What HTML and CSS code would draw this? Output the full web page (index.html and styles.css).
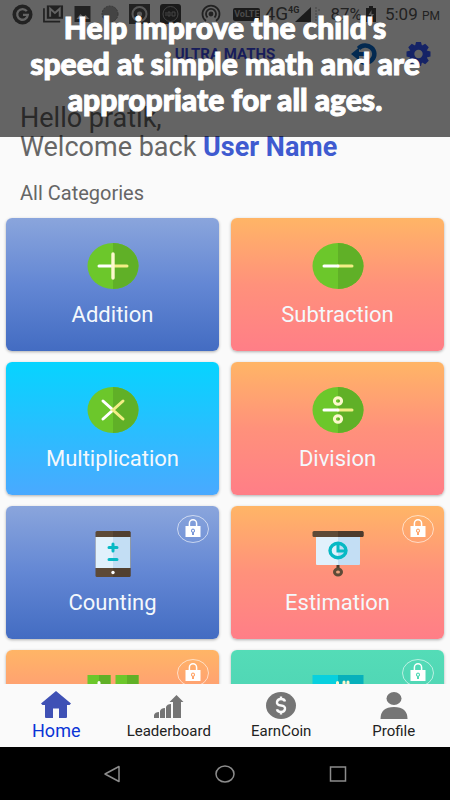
FILE: index.html
```html
<!DOCTYPE html>
<html lang="en">
<head>
    <meta charset="UTF-8">
    <meta name="viewport" content="width=device-width, initial-scale=1.0">
    <title>Ultra Maths</title>
    <link rel="stylesheet" href="styles.css">
</head>
<body>

<!-- shared icons -->
<svg class="sprite" aria-hidden="true">
    <symbol id="lock" viewBox="0 0 32 28">
        <ellipse cx="16" cy="14" rx="15.5" ry="13.5" fill="none" stroke="#fff" stroke-opacity=".6" stroke-width="1"/>
        <path d="M12.4 12V8.400a3.600 3.600 0 0 1 7.200 0V12" fill="none" stroke="#fff" stroke-width="1.500"/>
        <path fill="#fff" fill-rule="evenodd" d="M8.500 11h15v11h-15zM16 13.500a2.200 2.200 0 0 0-1 4.100V20h2v-2.400a2.200 2.200 0 0 0-1-4.100zm0 1.200a1 1 0 1 1 0 2a1 1 0 0 1 0-2z"/>
    </symbol>
    <symbol id="disc" viewBox="0 0 52 46">
        <ellipse cx="26" cy="23" rx="25.500" ry="23" fill="#6cc72b"/>
        <path d="M26 0a25.500 23 0 0 1 0 46z" fill="#60b027"/>
    </symbol>
</svg>

<header class="status-bar">
    <div class="status-icons">
        <svg width="21" height="21" viewBox="0 0 22 22"><circle cx="11" cy="11" r="10.500" fill="#555"/><path d="M15.500 7.500A5.600 5.600 0 1 0 16.600 11.500H11.500" fill="none" stroke="#fafafa" stroke-width="2.400"/></svg>
        <svg width="21" height="18" viewBox="0 0 22 18"><path d="M1 3v14h17" fill="none" stroke="#555" stroke-width="1.800"/><path d="M4 0h17v14H4z" fill="#555"/><path d="M7.500 12V3.500l5 4.500 5-4.500V12" fill="none" stroke="#fafafa" stroke-width="2"/></svg>
        <svg width="17" height="16" viewBox="0 0 16 16"><path d="M0 0h16v16H0z" fill="#555"/><path d="M2 13l4-5 3 3 2-2 4 4z" fill="#fafafa"/></svg>
        <svg width="18" height="18" viewBox="0 0 18 18"><circle cx="9" cy="9" r="8" fill="#aaa" stroke="#888" stroke-dasharray="2 1"/></svg>
        <svg width="21" height="20" viewBox="0 0 21 20"><rect width="21" height="20" fill="#555"/><circle cx="10.500" cy="10" r="7" fill="none" stroke="#ddd" stroke-width="2"/><circle cx="10.500" cy="10" r="2.600" fill="#ddd"/></svg>
        <svg width="21" height="20" viewBox="0 0 21 20"><rect width="21" height="20" rx="3" fill="#444"/><circle cx="10.500" cy="10" r="7.500" fill="none" stroke="#aaa"/><path d="M6 8v4M8 8h2v4H8zM12 8h3v4h-3z" fill="none" stroke="#aaa"/></svg>
    </div>
    <div class="status-info">
        <svg class="hotspot" width="20" height="20" viewBox="0 0 20 20" fill="none" stroke="#555" stroke-width="1.800"><path d="M5 17a8.500 8.500 0 1 1 10 0"/><path d="M6.500 13.500a5 5 0 1 1 7 0"/><circle cx="10" cy="10" r="1.500" fill="#555"/></svg>
        <span class="volte">VoLTE</span>
        <span class="network">4G<sup>4G</sup></span>
        <svg class="signal" width="16" height="15" viewBox="0 0 16 15"><path d="M16 0v15H0z" fill="#444"/></svg>
        <svg class="data" width="5" height="14" viewBox="0 0 5 14"><path d="M1 0v14M4 2v3M4 9v3" stroke="#aaa" stroke-dasharray="2 1"/></svg>
        <span class="battery-level">87%</span>
        <svg width="10" height="16" viewBox="0 0 10 16"><path d="M3 0h4v2h3v14H0V2h3z" fill="#444"/><path d="M5.500 4L2.500 9H5v4l3-5H5.500z" fill="#ddd"/></svg>
        <span class="clock">5:09 <small>PM</small></span>
    </div>
</header>

<div class="app-bar">
    <h1 class="app-title">ULTRA MATHS</h1>
    <div class="app-actions">
        <button class="icon-button" aria-label="Undo">
            <svg width="27" height="24" viewBox="0 0 27 24"><path d="M7.500 6.500A9 8.500 0 1 1 8 18" fill="none" stroke="#0867c8" stroke-width="4.500"/><path d="M0 12l8-6.500v4.500h8v4H8v4.500z" fill="#0867c8"/></svg>
        </button>
        <button class="icon-button" aria-label="Settings">
            <svg width="27" height="24" viewBox="0 0 27 24"><g transform="translate(13.500 12)"><g fill="#3557ff"><circle r="9.200"/><path id="tooth" d="M-2.500-12h5l1 4h-7z"/><use href="#tooth" transform="rotate(45)"/><use href="#tooth" transform="rotate(90)"/><use href="#tooth" transform="rotate(135)"/><use href="#tooth" transform="rotate(180)"/><use href="#tooth" transform="rotate(225)"/><use href="#tooth" transform="rotate(270)"/><use href="#tooth" transform="rotate(315)"/></g><circle r="4.200" fill="#fafafa"/></g></svg>
        </button>
    </div>
</div>

<main class="content">
    <p class="greeting">Hello pratik,<br>Welcome back <strong>User Name</strong></p>
    <h2 class="section-title">All Categories</h2>

    <div class="categories">
        <a href="#" class="card blue">
            <svg width="52" height="46" viewBox="0 0 52 46"><use href="#disc"/><path d="M12 23h14" stroke="#fff" stroke-width="3" stroke-linecap="round"/><path d="M26 23h14" stroke="#f3ee86" stroke-width="3" stroke-linecap="round"/><path d="M26 11v24" stroke="#fcf8cc" stroke-width="3.400" stroke-linecap="round"/></svg>
            <span>Addition</span>
        </a>
        <a href="#" class="card coral">
            <svg width="52" height="46" viewBox="0 0 52 46"><use href="#disc"/><path d="M26 23h14" stroke="#f3ee86" stroke-width="3" stroke-linecap="round"/><path d="M12 23h14" stroke="#fff" stroke-width="3" stroke-linecap="round"/></svg>
            <span>Subtraction</span>
        </a>
        <a href="#" class="card cyan">
            <svg width="52" height="46" viewBox="0 0 52 46"><use href="#disc"/><path d="M16 14l10 9-10 9" fill="none" stroke="#fff" stroke-width="3" stroke-linecap="round"/><path d="M36 14l-10 9 10 9" fill="none" stroke="#f3ee86" stroke-width="3" stroke-linecap="round"/></svg>
            <span>Multiplication</span>
        </a>
        <a href="#" class="card coral">
            <svg width="52" height="46" viewBox="0 0 52 46"><use href="#disc"/><path d="M26 23h14" stroke="#f3ee86" stroke-width="3" stroke-linecap="round"/><path d="M12 23h14" stroke="#fff" stroke-width="3" stroke-linecap="round"/><g fill="none" stroke="#fcf8cc" stroke-width="3"><ellipse cx="26" cy="14" rx="3.600" ry="3.200"/><ellipse cx="26" cy="32" rx="3.600" ry="3.200"/></g></svg>
            <span>Division</span>
        </a>
        <a href="#" class="card blue">
            <svg class="lock" aria-label="Locked"><use href="#lock"/></svg>
            <svg width="52" height="46" viewBox="0 0 52 46"><rect x="8.500" width="35" height="46" rx="1.500" fill="#5d4a37"/><path d="M26 0h16a1.500 1.500 0 0 1 1.500 1.500v43A1.500 1.500 0 0 1 42 46H26z" fill="#514030"/><path d="M8.500 6H26v31H8.500z" fill="#e1f1fc"/><path d="M26 6h17.500v31H26z" fill="#c3def4"/><path d="M22 16.500h8M26 13v7M22 28.500h8" stroke="#07b9c4" stroke-width="3" stroke-linecap="round"/><circle cx="26" cy="41.500" r="1.700" fill="#fff"/></svg>
            <span>Counting</span>
        </a>
        <a href="#" class="card coral">
            <svg class="lock" aria-label="Locked"><use href="#lock"/></svg>
            <svg width="52" height="46" viewBox="0 0 52 46"><path d="M4 5h22v29H5a1 1 0 0 1-1-1z" fill="#e1f1fc"/><path d="M26 5h22v28a1 1 0 0 1-1 1H26z" fill="#c3def4"/><rect x=".5" width="51" height="6" rx="1.500" fill="#5d4a37"/><path d="M26 0h24a1.500 1.500 0 0 1 1.500 1.500v3A1.500 1.500 0 0 1 50 6H26z" fill="#4d3b2c"/><path d="M26 34v5" stroke="#4d3b2c" stroke-width="3"/><ellipse cx="26" cy="41" rx="3.500" ry="3" fill="#e9a07c" stroke="#5d4a37" stroke-width="3"/><ellipse cx="26" cy="19.500" rx="8" ry="7.200" fill="none" stroke="#07b9c4" stroke-width="3.400"/><path d="M26 13v7h8" fill="none" stroke="#07b9c4" stroke-width="3"/></svg>
            <span>Estimation</span>
        </a>
        <a href="#" class="card orange" aria-label="Locked category">
            <svg class="lock" aria-hidden="true"><use href="#lock"/></svg>
            <svg width="52" height="46" viewBox="0 0 52 46"><path d="M.5 0h23v20H.5zM28.500 0h23v20h-23z" fill="#6cc72b"/><path d="M12 0h11.500v20H12zM40 0h11.500v20H40z" fill="#60b027"/><path d="M12 7.500v8M8 11.500h8" stroke="#fff" stroke-width="3" stroke-linecap="round"/></svg>
        </a>
        <a href="#" class="card green" aria-label="Locked category">
            <svg class="lock" aria-hidden="true"><use href="#lock"/></svg>
            <svg width="52" height="46" viewBox="0 0 52 46"><path d="M.5 0H26v46H.5z" fill="#08d0de"/><path d="M26 0h25.500v46H26z" fill="#07b0bb"/><path d="M25.500 7.500v4M32 7v4M36 7v4" stroke="#fcf8cc" stroke-width="3" stroke-linecap="round"/></svg>
        </a>
    </div>
</main>

<nav class="tab-bar">
    <a href="#" class="tab active">
        <svg width="30" height="28" viewBox="0 0 30 28"><path d="M15 0L0 12.500 1.500 14H4v12q0 1 1 1h7v-9.500h6V27h7q1 0 1-1V14h2.500l1.500-1.500z" fill="#3f51b5"/></svg>
        <span>Home</span>
    </a>
    <a href="#" class="tab">
        <svg width="30" height="28" viewBox="0 0 30 28" fill="#757575"><path d="M0 27v-3q1-3 5-3v6zM6 27v-7q1-3 5-3v10zM12 27V16q1-3 5-3v14zM19 27V11h-3.500L22.500 4l7 7H27v16z"/></svg>
        <span>Leaderboard</span>
    </a>
    <a href="#" class="tab">
        <svg width="30" height="28" viewBox="0 0 30 28"><ellipse cx="15" cy="14.500" rx="15" ry="13.500" fill="#757575"/><path d="M19 10.500Q18.500 8 15 8t-4 3 4 3.500 4 3.500-4 3-4-2.800M15 5.500V8M15 21v2.500" fill="none" stroke="#fafafa" stroke-width="2.400"/></svg>
        <span>EarnCoin</span>
    </a>
    <a href="#" class="tab">
        <svg width="30" height="28" viewBox="0 0 30 28" fill="#757575"><ellipse cx="15" cy="7.500" rx="7.500" ry="6.500"/><path d="M1.500 28q0-12 13.500-12t13.500 12z"/></svg>
        <span>Profile</span>
    </a>
</nav>

<footer class="system-bar">
    <button class="icon-button" aria-label="Back"><svg width="18" height="18" viewBox="0 0 18 18"><path d="M16 1.500v15L2 9z" fill="none" stroke="#8c8c8c" stroke-width="1.500" stroke-linejoin="round"/></svg></button>
    <button class="icon-button" aria-label="Home screen"><svg width="20" height="18" viewBox="0 0 20 18"><ellipse cx="10" cy="9" rx="9" ry="8" fill="none" stroke="#8c8c8c" stroke-width="1.500"/></svg></button>
    <button class="icon-button" aria-label="Recent apps"><svg width="18" height="18" viewBox="0 0 18 18"><path d="M1.500 2h15v14h-15z" fill="none" stroke="#8c8c8c" stroke-width="1.500"/></svg></button>
</footer>

<div class="caption">Help improve the child's<br>speed at simple math and are<br>appropriate for all ages.</div>

</body>
</html>
```
FILE: styles.css
```css
* {
    box-sizing: border-box;
}
body {
    display: flex;
    flex-direction: column;
    position: relative;
    height: 100vh;
    margin: 0;
    overflow: hidden;
    background-color: #fafafa;
    font-family: Roboto, sans-serif;
    color: #666;
}
a {
    color: inherit;
    text-decoration: none;
}
svg {
    display: block;
    flex: none;
}
.sprite {
    position: absolute;
    width: 0;
    height: 0;
}
.icon-button {
    padding: 0;
    border: 0;
    background: none;
}

/* status bar */
.status-bar {
    display: flex;
    justify-content: space-between;
    align-items: center;
    height: 28px;
    padding: 0 10px 0 12px;
    color: #555;
}
.status-icons {
    display: flex;
    align-items: center;
    gap: 10px;
}
.status-info {
    display: flex;
    align-items: center;
    gap: 4px;
    white-space: nowrap;
}
.hotspot {
    margin-right: 8px;
}
.volte {
    padding: 0 1px;
    border-radius: 2px;
    background-color: #444;
    color: #bbb;
    font-size: 9px;
    font-weight: bold;
    line-height: 13px;
}
.network {
    font-size: 19px;
    line-height: 20px;
}
.network sup {
    font-size: 9px;
    font-weight: bold;
    line-height: 1px;
}
.signal {
    margin-left: -8px;
}
.data {
    margin-right: 6px;
}
.battery-level {
    font-size: 17px;
}
.clock {
    margin-left: 5px;
    font-size: 17px;
}
.clock small {
    font-size: 12px;
}

/* app bar */
.app-bar {
    display: grid;
    grid-template-columns: 1fr auto 1fr;
    align-items: center;
    height: 52px;
    padding: 0 18px;
}
.app-title {
    grid-column: 2;
    margin: 0;
    font-size: 15px;
    color: #3a48e0;
}
.app-actions {
    display: flex;
    justify-content: flex-end;
    gap: 27px;
}

/* content */
.content {
    flex: 1;
    min-height: 0;
    overflow: hidden;
}
.greeting {
    margin: 24px 20px 20px;
    font-size: 27px;
    line-height: 29px;
}
.greeting strong {
    color: #3f5bd0;
}
.section-title {
    margin: 0 20px 14px;
    font-size: 20px;
    font-weight: normal;
    line-height: 22px;
}
.categories {
    display: grid;
    grid-template-columns: 1fr 1fr;
    gap: 11px 12px;
    padding: 0 6px;
}
.card {
    display: flex;
    flex-direction: column;
    align-items: center;
    gap: 12px;
    position: relative;
    height: 133px;
    padding-top: 25px;
    border-radius: 6px;
    box-shadow: 0 1px 3px rgba(0, 0, 0, 0.3);
    color: #f4f8fc;
    font-size: 22px;
    line-height: 28px;
}
.blue {
    background: linear-gradient(#8aa5dc, #6387d4 50%, #436cc2);
}
.coral,
.orange {
    background: linear-gradient(#ffb566, #ff917b 50%, #ff7e87);
}
.cyan {
    background: linear-gradient(#06d4ff, #4aa9ff);
}
.green {
    background: linear-gradient(#54dcb7, #48c9b0);
}
.lock {
    position: absolute;
    top: 9px;
    right: 10px;
    width: 32px;
    height: 28px;
}

/* bottom tabs */
.tab-bar {
    display: grid;
    grid-template-columns: repeat(4, 1fr);
    height: 63px;
    padding-top: 7px;
    background-color: #fafafa;
}
.tab {
    display: flex;
    flex-direction: column;
    align-items: center;
    gap: 2px;
    color: #222;
    font-size: 15px;
    line-height: 20px;
}
.active {
    color: #0a34d6;
    font-size: 18px;
}

/* android buttons */
.system-bar {
    display: flex;
    justify-content: space-evenly;
    align-items: center;
    height: 53px;
    padding: 0 9px;
    background-color: #000;
}

/* promo text over the top of the screen */
.caption {
    position: absolute;
    top: 0;
    left: 0;
    right: 0;
    padding: 9px 0 20px;
    background-color: rgba(0, 0, 0, 0.6);
    color: #fff;
    font-family: Lato, sans-serif;
    font-size: 30px;
    font-weight: 900;
    line-height: 36px;
    text-align: center;
    -webkit-text-stroke: 1px #fff;
}
```
